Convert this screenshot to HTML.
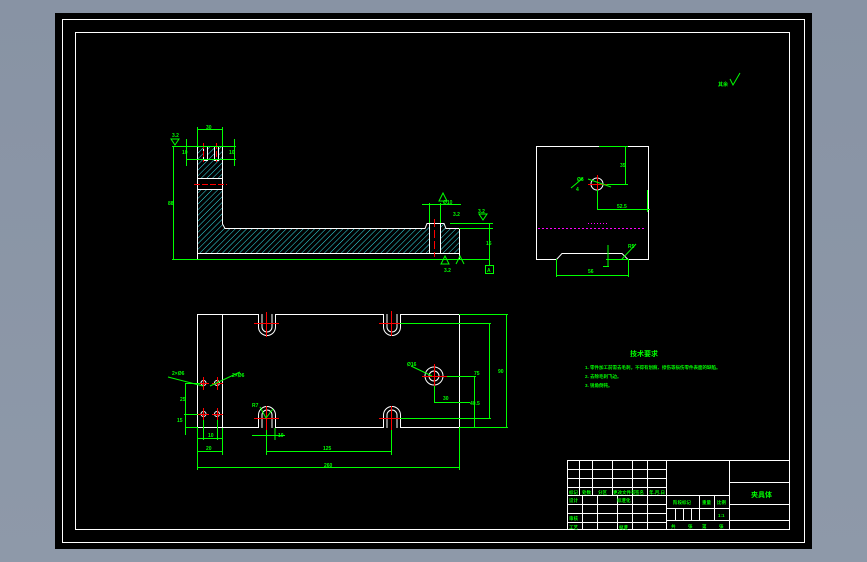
<!DOCTYPE html>
<html><head><meta charset="utf-8"><style>
html,body{margin:0;padding:0;width:867px;height:562px;overflow:hidden;background:linear-gradient(#8893a4,#8e99a9);}
svg{position:absolute;left:0;top:0}
text{font-family:"Liberation Sans","Noto Sans CJK SC",sans-serif;fill:#00ff00;font-weight:bold}
</style></head><body>
<svg width="867" height="562" viewBox="0 0 867 562">
<defs>
<pattern id="h" width="4" height="4" patternUnits="userSpaceOnUse" patternTransform="rotate(45)">
<line x1="0" y1="0" x2="0" y2="4" stroke="#35e0e8" stroke-width="1"/>
</pattern>
</defs>
<rect x="55" y="13" width="757" height="536" fill="#000"/>
<g fill="none" stroke="#fff" stroke-width="1">
<rect x="62.5" y="19.5" width="742" height="523"/>
<rect x="75.5" y="32.5" width="714" height="497"/>
</g>

<!-- FRONT VIEW -->
<path d="M197 146H222V224L225 228H425L427 223H429V253H197Z" fill="url(#h)"/>
<path d="M440 223H444L446 228H459V253H440Z" fill="url(#h)"/>
<rect x="197" y="178" width="25" height="11" fill="#000"/>
<rect x="203" y="146" width="4" height="14" fill="#000"/>
<rect x="214" y="146" width="4" height="14" fill="#000"/>
<g fill="none" stroke="#fff" stroke-width="1">
<path d="M197.5 146.5H222.5V224L225 228.5H425L427 223.5H444L446 228.5H459.5V259.5H197.5Z"/>
<path d="M197.5 253.5H459.5M429.5 223.5V253.5M440.5 223.5V253.5M197.5 178.5H222.5M197.5 189.5H222.5M203.5 146V160.5H207.5V146M214.5 146V160.5H218.5V146"/>
</g>
<g stroke="#f00" stroke-width="1" fill="none">
<path d="M203.5 143V162M216.5 143V162M194 184.5H227" stroke-dasharray="6,2"/>
<path d="M434.5 219V257" stroke-dasharray="8,3"/>
</g>
<g stroke="#0f0" stroke-width="1" fill="none">
<path d="M197.5 127V146M222.5 127V146M197 129.5H222M172 146.5H236M186.5 139V166M234.5 139V166M186 159.5H236M172 259.5H490M173.5 146V259M429.5 203V223M440.5 203V223M422 204.5H461M450 223.5H493M459 228.5H493M489.5 223V265"/>
<path d="M175 145l4 -6h-8zM439 201l4 -8 4 8zM483 220l4 -6h-8zM441 264l4 -8 4 8zM456 264l4 -8 4 8"/>
<rect x="485.5" y="265.5" width="8" height="8"/>
</g>
<g font-size="5">
<text x="172" y="137">3.2</text><text x="206" y="129">30</text>
<text x="182" y="154">10</text><text x="229" y="154">10</text>
<text x="168" y="205">88</text><text x="443" y="204">Ø10</text>
<text x="453" y="216">3.2</text><text x="478" y="213">3.2</text>
<text x="486" y="245">16</text><text x="444" y="272">3.2</text><text x="487" y="272">A</text>
</g>

<!-- TOP VIEW -->
<g fill="none" stroke="#fff" stroke-width="1">
<path d="M197.5 314.5H258.5V327A7.5 7.5 0 0 0 275.5 327V314.5H383.5V327A7.5 7.5 0 0 0 400.5 327V314.5H459.5V427.5H400.5V415A7.5 7.5 0 0 0 383.5 415V427.5H275.5V415A7.5 7.5 0 0 0 258.5 415V427.5H197.5Z"/>
<path d="M262 314V327A5 5 0 0 0 272 327V314M387 314V327A5 5 0 0 0 397 327V314M262 428V415A5 5 0 0 1 272 415V428M387 428V415A5 5 0 0 1 397 415V428M222.5 314V428"/>
<circle cx="434" cy="376" r="9"/><circle cx="434" cy="376" r="5"/>
<circle cx="203.5" cy="383" r="2.5"/><circle cx="217" cy="383" r="2.5"/>
<circle cx="203.5" cy="414" r="2.5"/><circle cx="217" cy="414" r="2.5"/>
</g>
<g stroke="#f00" stroke-width="1" fill="none">
<path d="M266.5 312V337M254 323.5H279M391.5 311V336M379 323.5H404M266.5 406V431M254 418.5H279M391.5 406V431M379 418.5H404M434.5 364V389M422 376.5H447M203.5 377V390M198 383.5H209M217.5 377V390M212 383.5H223M203.5 408V421M198 414.5H209M217.5 408V421M212 414.5H223"/>
</g>
<g stroke="#0f0" stroke-width="1" fill="none">
<path d="M459 314.5H508M400 323.5H491M400 418.5H491M459 427.5H508M506.5 314V428M489.5 323V419M447 376.5H476M474.5 376V428M434.5 386V403M434 402.5H470M185 383.5H200M185.5 383V435M184 414.5H198M185 427.5H198M197.5 428V470M222.5 428V455M203.5 420V440M217.5 420V440M197 438.5H223M197 451.5H223M266.5 430V455M391.5 430V455M266 451.5H392M197 467.5H460M459.5 428V470M252 435.5H285M275 428V440"/>
<path d="M168 377L203 386M210 386L240 372M411 366L432 376M260 407L266 418L273 409"/>
</g>
<g font-size="5">
<text x="172" y="375">2×Ø6</text><text x="232" y="377">2×Ø6</text>
<text x="180" y="401">25</text><text x="177" y="422">15</text>
<text x="208" y="437">10</text><text x="206" y="450">20</text>
<text x="278" y="437">10</text><text x="323" y="450">125</text>
<text x="324" y="467">260</text><text x="474" y="375">75</text>
<text x="498" y="373">90</text><text x="443" y="400">30</text>
<text x="470" y="405">40.5</text><text x="407" y="366">Ø16</text>
<text x="252" y="407">R7</text>
</g>

<!-- SIDE VIEW -->
<g fill="none" stroke="#fff" stroke-width="1">
<path d="M536.5 146.5H648.5V259.5H628L622 253.5H562L556.5 259.5H536.5Z"/>
<circle cx="597" cy="184" r="6"/>
</g>
<path d="M538 228.5H646" stroke="#f0f" stroke-dasharray="2,2"/>
<path d="M588 223.5H607" stroke="#f0f" stroke-dasharray="1,2"/>
<g stroke="#f00" stroke-width="1" fill="none"><path d="M597.5 175V193M588 184.5H607"/></g>
<g stroke="#0f0" stroke-width="1" fill="none">
<path d="M599 146.5H628M625.5 146V184M607 184.5H628M597.5 190V210M597 209.5H650M647.5 190V212M556.5 259V277M628.5 259V277M556 275.5H629M608 245V266M603 266.5H609M606 259.5H628M622 259L636 244M571 188L583 178M588 179L611 187"/>
</g>
<g font-size="5">
<text x="620" y="167">35</text><text x="617" y="208">52.5</text>
<text x="588" y="273">56</text><text x="628" y="248">R5</text>
<text x="577" y="181">Ø6</text><text x="576" y="191">4</text>
</g>

<!-- roughness top right -->
<text x="718" y="86" font-size="5">其余</text>
<path d="M730 79l3 6 7 -12" stroke="#0f0" fill="none"/>

<!-- TECH NOTES -->
<text x="630" y="356" font-size="7">技术要求</text>
<g font-size="4.5">
<text x="585" y="369">1. 零件加工前需去毛刺，不得有划痕、擦伤等损伤零件表面的缺陷。</text>
<text x="585" y="378">2. 去除毛刺飞边。</text>
<text x="585" y="387">3. 锐角倒钝。</text>
</g>

<!-- TITLE BLOCK -->
<g fill="none" stroke="#fff" stroke-width="1">
<rect x="567.5" y="460.5" width="222" height="69"/>
<path d="M567 469.5H667M567 478.5H667M567 487.5H667M567 495.5H729M567 504.5H667M567 513.5H667M567 522.5H667M579.5 460V495M592.5 460V495M612.5 460V495M632.5 460V530M647.5 460V530M666.5 460V530M582.5 495V530M597.5 495V530M617.5 495V530M729.5 460V530M729 482.5H790M729 504.5H790M729 520.5H790M667 508.5H729M667 520.5H729M699.5 495V520M714.5 495V520M675.5 508V520M683.5 508V520M691.5 508V520"/>
</g>
<g font-size="4.5">
<text x="569" y="494">标记</text><text x="582" y="494">处数</text><text x="598" y="494">分区</text><text x="613" y="494">更改文件号</text><text x="635" y="494">签名</text><text x="649" y="494">年.月.日</text>
<text x="569" y="502">设计</text><text x="617" y="502">标准化</text>
<text x="569" y="520">审核</text><text x="569" y="529">工艺</text><text x="619" y="529">批准</text>
<text x="673" y="504">阶段标记</text><text x="702" y="504">重量</text><text x="717" y="504">比例</text>
<text x="718" y="517">1:1</text>
<text x="671" y="528">共</text><text x="688" y="528">张</text><text x="702" y="528">第</text><text x="719" y="528">张</text>
</g>
<text x="751" y="497" font-size="7">夹具体</text>
</svg>
</body></html>
